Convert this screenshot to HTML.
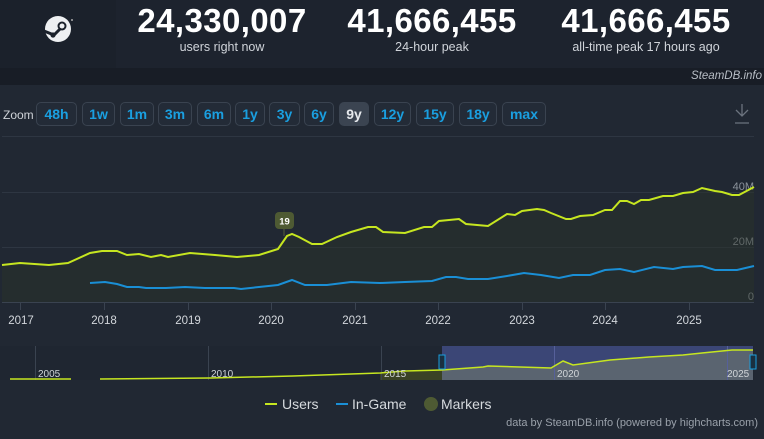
<!DOCTYPE html>
<html><head><meta charset="utf-8"><style>
*{margin:0;padding:0;box-sizing:border-box}
body{width:764px;height:439px;background:#212833;font-family:"Liberation Sans",sans-serif;overflow:hidden;position:relative;color:#fff}
.hdr{position:absolute;left:0;top:0;width:764px;height:68px;background:#1d232e}
.logo{position:absolute;left:0;top:0;width:116px;height:68px;background:#1b212b}
.stat{position:absolute;top:3px;text-align:center;width:220px}
.stat b{display:block;font-size:33px;font-weight:bold;line-height:36px;letter-spacing:0.4px}
.stat span{display:block;font-size:12.5px;color:#d0d4da;margin-top:1px}
.strip{position:absolute;left:0;top:68px;width:764px;height:17px;background:#181d26}
.strip i{position:absolute;right:2px;top:2px;font-size:11.5px;color:#b8bec6}
.zl{position:absolute;left:3px;top:108px;font-size:12px;color:#cfd3d8}
.btn{position:absolute;top:102px;height:24px;border:1px solid #3a4350;border-radius:5px;color:#1a9fe0;font-weight:bold;font-size:14px;text-align:center;line-height:22px;background:#232b37}
.btn.on{background:#3b4451;color:#e6e9ed;border-color:#3b4451}
.yl{position:absolute;top:315px;font-size:11.5px;color:#d3d7dc;transform:translateX(-50%)}
.leg{position:absolute;top:396px;font-size:14px;color:#d6dade}
.credit{position:absolute;right:6px;top:417px;font-size:11px;color:#9aa1aa}
</style></head><body>
<div class="hdr"></div>
<div class="logo"><svg width="116" height="68"><circle cx="58" cy="29" r="13" fill="#eef0f2"/><circle cx="62" cy="26" r="4.5" fill="#1b212b"/><circle cx="62" cy="26" r="2.5" fill="#eef0f2"/><path d="M44 31 L54 35 L60 29" stroke="#1b212b" stroke-width="3" fill="none"/><circle cx="53" cy="35" r="2.6" fill="#1b212b"/><circle cx="72" cy="20" r="1" fill="#aaa"/></svg></div>
<div class="stat" style="left:112px"><b>24,330,007</b><span>users right now</span></div>
<div class="stat" style="left:322px"><b>41,666,455</b><span>24-hour peak</span></div>
<div class="stat" style="left:536px"><b>41,666,455</b><span>all-time peak 17 hours ago</span></div>
<div class="strip"><i>SteamDB.info</i></div>
<div class="zl">Zoom</div>
<div class="btn" style="left:36px;width:41px">48h</div>
<div class="btn" style="left:82px;width:33px">1w</div>
<div class="btn" style="left:120px;width:34px">1m</div>
<div class="btn" style="left:158px;width:34px">3m</div>
<div class="btn" style="left:197px;width:34px">6m</div>
<div class="btn" style="left:235px;width:30px">1y</div>
<div class="btn" style="left:269px;width:31px">3y</div>
<div class="btn" style="left:304px;width:30px">6y</div>
<div class="btn on" style="left:339px;width:30px">9y</div>
<div class="btn" style="left:374px;width:37px">12y</div>
<div class="btn" style="left:416px;width:38px">15y</div>
<div class="btn" style="left:459px;width:38px">18y</div>
<div class="btn" style="left:502px;width:44px">max</div>
<svg style="position:absolute;left:0;top:0" width="764" height="439">
<path d="M736 110 L742 116 L748 110 M742 116 V104 M735 123 H749" stroke="#6b737e" stroke-width="1.3" fill="none"/>
<g stroke="#2e3642" stroke-width="1"><line x1="2" y1="136.5" x2="754" y2="136.5"/><line x1="2" y1="192.5" x2="754" y2="192.5"/><line x1="2" y1="247.5" x2="754" y2="247.5"/><line x1="2" y1="302.5" x2="754" y2="302.5" stroke="#3a4350"/></g>
<g stroke="#3a4350"><line x1="20.5" y1="302" x2="20.5" y2="310"/><line x1="104.5" y1="302" x2="104.5" y2="310"/><line x1="188.5" y1="302" x2="188.5" y2="310"/><line x1="271.5" y1="302" x2="271.5" y2="310"/><line x1="355.5" y1="302" x2="355.5" y2="310"/><line x1="438.5" y1="302" x2="438.5" y2="310"/><line x1="522.5" y1="302" x2="522.5" y2="310"/><line x1="605.5" y1="302" x2="605.5" y2="310"/><line x1="689.5" y1="302" x2="689.5" y2="310"/></g>
<g font-size="11" fill="#8c939c" text-anchor="end"><text x="754" y="190">40M</text><text x="754" y="245">20M</text><text x="754" y="300">0</text></g>
<path d="M2 265 L20 263 L49 265 L68 263 L90 253 L102 251 L117 251 L127 255 L139 254 L151 257 L161 255 L168 257 L190 253 L215 255 L237 257 L259 255 L278 249 L287 236 L292 234 L299 237 L312 244 L322 244 L337 237 L351 232 L368 227 L376 227 L383 232 L405 233 L424 227 L432 227 L439 221 L459 219 L466 224 L488 226 L507 214 L515 215 L522 211 L537 209 L544 210 L551 213 L566 219 L571 219 L580 216 L593 215 L605 210 L612 210 L620 201 L627 201 L634 204 L641 200 L649 200 L663 196 L673 196 L683 193 L693 192 L702 188 L715 191 L722 192 L732 195 L739 195 L754 187 L754 302 L2 302Z" fill="#2a3328" opacity="0.45"/>
<path d="M2 265 L20 263 L49 265 L68 263 L90 253 L102 251 L117 251 L127 255 L139 254 L151 257 L161 255 L168 257 L190 253 L215 255 L237 257 L259 255 L278 249 L287 236 L292 234 L299 237 L312 244 L322 244 L337 237 L351 232 L368 227 L376 227 L383 232 L405 233 L424 227 L432 227 L439 221 L459 219 L466 224 L488 226 L507 214 L515 215 L522 211 L537 209 L544 210 L551 213 L566 219 L571 219 L580 216 L593 215 L605 210 L612 210 L620 201 L627 201 L634 204 L641 200 L649 200 L663 196 L673 196 L683 193 L693 192 L702 188 L715 191 L722 192 L732 195 L739 195 L754 187" stroke="#c6e620" stroke-width="2" fill="none"/>
<path d="M90 283 L105 282 L117 284 L127 287 L139 287 L146 288 L166 288 L185 287 L205 288 L234 288 L241 289 L259 287 L278 285 L292 280 L305 285 L327 285 L351 282 L380 283 L405 282 L432 281 L446 277 L456 277 L468 279 L488 279 L507 276 L524 273 L541 275 L559 278 L573 275 L590 275 L605 270 L620 269 L634 272 L654 267 L673 269 L683 267 L702 266 L715 270 L737 270 L754 266" stroke="#1a8fd6" stroke-width="2" fill="none"/>
<line x1="284" y1="229" x2="284" y2="236" stroke="#56613a"/>
<rect x="275" y="212" width="19" height="17" rx="4" fill="#4e5a33"/>
<text x="284.5" y="224.5" font-size="9.5" font-weight="bold" fill="#fff" text-anchor="middle">19</text>
<rect x="0" y="346" width="754" height="34" fill="#1f2631"/>
<rect x="442" y="346" width="311" height="34" fill="#3b4676"/>
<path d="M442 370 L483 367 L488 366 L551 368 L563 361 L573 365 L610 360 L649 357 L683 355 L702 353 L732 350 L753 350 L753 380 L442 380Z" fill="#5a6470"/>
<path d="M380 380 L380 373 L405 371 L442 370 L442 380Z" fill="#3a4225"/>
<g stroke="#3a4350"><line x1="35.5" y1="346" x2="35.5" y2="380"/><line x1="208.5" y1="346" x2="208.5" y2="380"/><line x1="381.5" y1="346" x2="381.5" y2="380"/><line x1="554.5" y1="346" x2="554.5" y2="380" stroke="#56609a"/><line x1="727.5" y1="346" x2="727.5" y2="380" stroke="#56609a"/></g>
<path d="M10 379 L71 379 M100 379 L210 378 L293 376 L380 373 L405 371 L442 370 L483 367 L488 366 L551 368 L563 361 L573 365 L610 360 L649 357 L683 355 L702 353 L732 350 L753 350" stroke="#c6e620" stroke-width="1.5" fill="none"/>
<g font-size="10" fill="#d0d4d8"><text x="38" y="377">2005</text><text x="211" y="377">2010</text><text x="384" y="377">2015</text><text x="557" y="377">2020</text><text x="727" y="377">2025</text></g>
<rect x="439" y="355" width="6" height="14" fill="#1a3040" stroke="#1a9fe0"/>
<rect x="750" y="355" width="6" height="14" fill="#1a3040" stroke="#1a9fe0"/>
<line x1="265" y1="404" x2="277" y2="404" stroke="#c6e620" stroke-width="2"/>
<line x1="336" y1="404" x2="348" y2="404" stroke="#1a8fd6" stroke-width="2"/>
<circle cx="431" cy="404" r="7" fill="#4e5a33"/>
</svg>
<div class="yl" style="left:21px">2017</div><div class="yl" style="left:104px">2018</div><div class="yl" style="left:188px">2019</div><div class="yl" style="left:271px">2020</div><div class="yl" style="left:355px">2021</div><div class="yl" style="left:438px">2022</div><div class="yl" style="left:522px">2023</div><div class="yl" style="left:605px">2024</div><div class="yl" style="left:689px">2025</div>
<div class="leg" style="left:282px">Users</div><div class="leg" style="left:352px">In-Game</div><div class="leg" style="left:441px">Markers</div>
<div class="credit">data by SteamDB.info (powered by highcharts.com)</div>
</body></html>
